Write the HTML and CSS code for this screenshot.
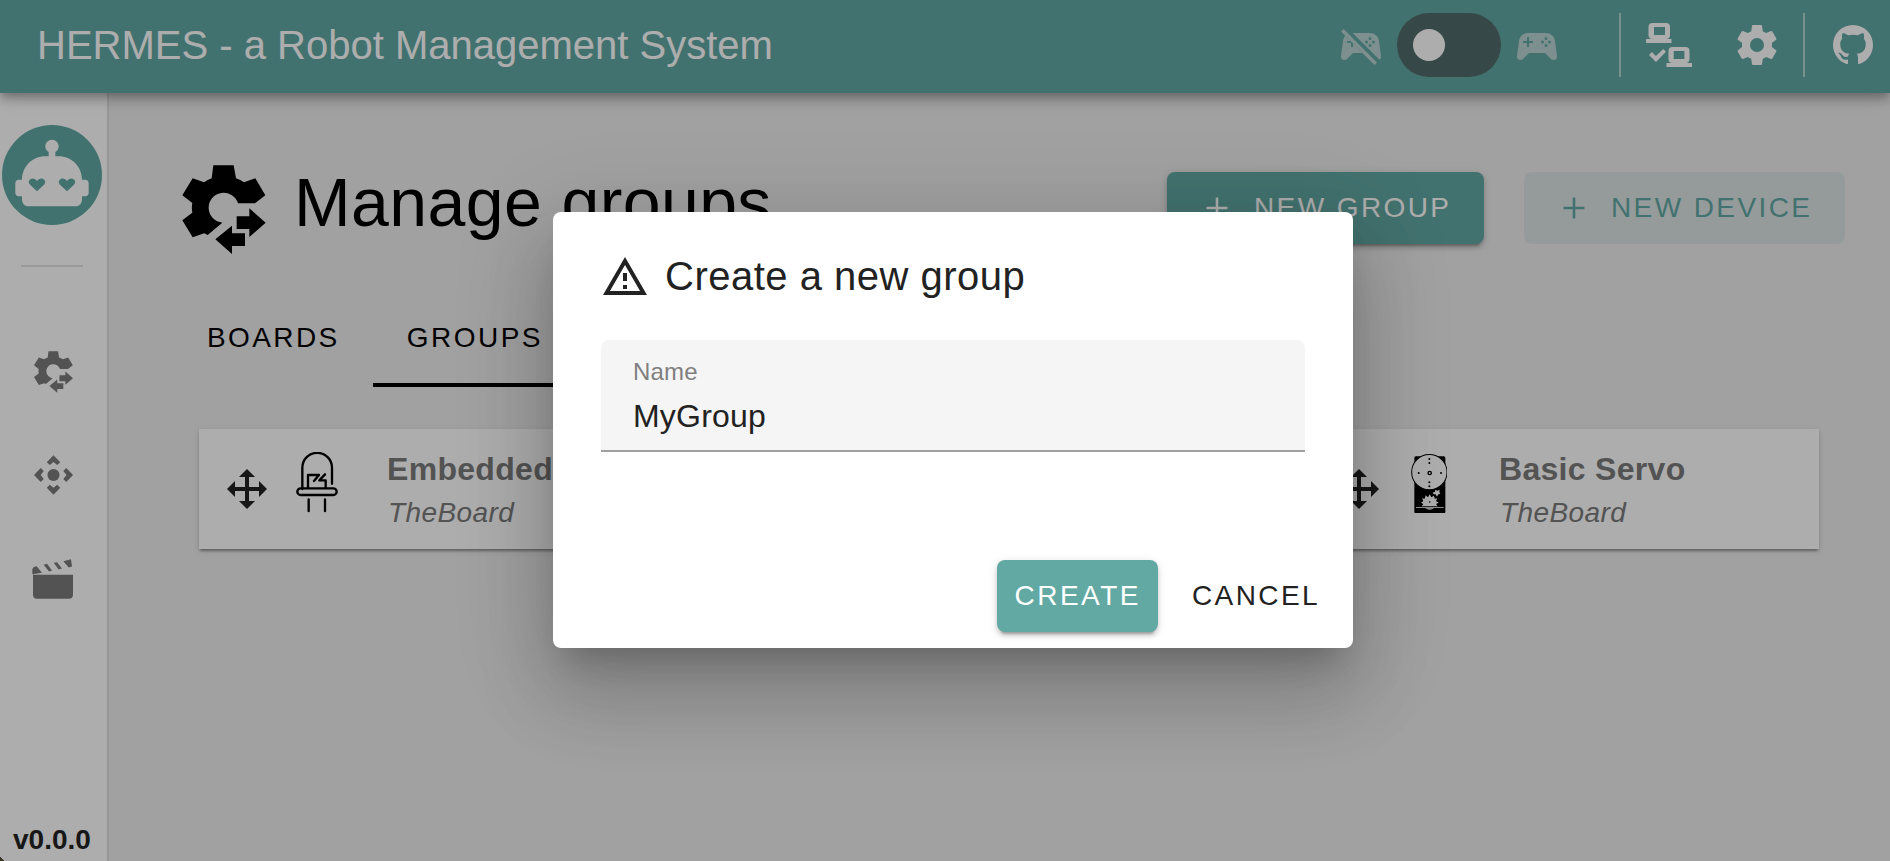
FILE: index.html
```html
<!DOCTYPE html>
<html lang="en">
<head>
<meta charset="utf-8">
<title>HERMES - a Robot Management System</title>
<link rel="stylesheet" href="styles.css">
</head>
<body>
<svg class="defs" width="0" height="0" aria-hidden="true">
  <symbol id="cog-transfer" viewBox="548 195 250 267">
    <path d="M641 196H702L709 235Q722 240 733 247L767 235L797 286L766 310H715A45 45 0 1 0 668 368L624 405L614 400L579 412L548 361L578 338Q575 323 578 309L548 286L579 235L613 247Q624 239 636 235Z"/>
    <path d="M711 349H749V325L798 368L749 411V387H711Z"/>
    <path d="M697 377V400H736V438H697V462L647 418Z"/>
  </symbol>
  <symbol id="move" viewBox="0 0 40 40">
    <path d="M20 0L28 8H22V18H32V12L40 20L32 28V22H22V32H28L20 40L12 32H18V22H8V28L0 20L8 12V18H18V8H12Z"/>
  </symbol>
  <symbol id="plus" viewBox="0 0 24 24"><path d="M19 12.850H12.850V19H11.150V12.850H5V11.150H11.150V5H12.850V11.150H19Z"/></symbol>
</svg>

<div class="app">
  <header class="bar">
    <h1 class="bar-title">HERMES - a Robot Management System</h1>
    <div class="bar-tools">
      <svg class="icon dim" viewBox="0 0 24 24">
        <clipPath id="upper"><path d="M1.85 0H24V22.15Z"/></clipPath>
        <clipPath id="lower"><path d="M0 3.2L20.8 24H0Z"/></clipPath>
        <g fill-rule="evenodd">
          <path clip-path="url(#upper)" d="M7.97,16L5,19C4.67,19.3 4.23,19.5 3.75,19.5A1.75,1.75 0 0,1 2,17.75V17.5L3,10.12C3.21,7.81 5.14,6 7.5,6H16.5C18.86,6 20.79,7.81 21,10.12L22,17.5V17.75A1.75,1.75 0 0,1 20.25,19.5C19.77,19.5 19.33,19.3 19,19L16.03,16H7.97M16.5,8A0.75,0.75 0 0,0 16.5,9.5A0.75,0.75 0 0,0 16.5,8M14.75,9.75A0.75,0.75 0 0,0 14.75,11.25A0.75,0.75 0 0,0 14.75,9.75M18.25,9.75A0.75,0.75 0 0,0 18.25,11.25A0.75,0.75 0 0,0 18.25,9.75M16.5,11.5A0.75,0.75 0 0,0 16.5,13A0.75,0.75 0 0,0 16.5,11.5Z"/>
          <path clip-path="url(#lower)" d="M7.97,16L5,19C4.67,19.3 4.23,19.5 3.75,19.5A1.75,1.75 0 0,1 2,17.75V17.5L3,10.12C3.21,7.81 5.14,6 7.5,6H16.5L16.03,16H7.97M7,8V10H5V11H7V13H8V11H10V10H8V8H7Z"/>
        </g>
        <path d="M2 5.27L3.28 4L20 20.72L18.73 22Z"/>
      </svg>
      <div class="switch"><span class="thumb"></span></div>
      <svg class="icon dim" viewBox="0 0 24 24"><path fill-rule="evenodd" d="M7.97,16L5,19C4.67,19.3 4.23,19.5 3.75,19.5A1.75,1.75 0 0,1 2,17.75V17.5L3,10.12C3.21,7.81 5.14,6 7.5,6H16.5C18.86,6 20.79,7.81 21,10.12L22,17.5V17.75A1.75,1.75 0 0,1 20.25,19.5C19.77,19.5 19.33,19.3 19,19L16.03,16H7.97M7,8V10H5V11H7V13H8V11H10V10H8V8H7M16.5,8A0.75,0.75 0 0,0 16.5,9.5A0.75,0.75 0 0,0 16.5,8M14.75,9.75A0.75,0.75 0 0,0 14.75,11.25A0.75,0.75 0 0,0 14.75,9.75M18.25,9.75A0.75,0.75 0 0,0 18.25,11.25A0.75,0.75 0 0,0 18.25,9.75M16.5,11.5A0.75,0.75 0 0,0 16.5,13A0.75,0.75 0 0,0 16.5,11.5Z"/></svg>
      <span class="rule rule-first"></span>
      <svg class="icon-lan" viewBox="0 0 46 44">
        <path fill-rule="evenodd" d="M6.5 0H20A4 4 0 0 1 24 4V12A4 4 0 0 1 20 16H25.5V20H0V16H6.5A4 4 0 0 1 2.5 12V4A4 4 0 0 1 6.5 0ZM8 4V12H19V4Z"/>
        <path fill-rule="evenodd" d="M26.5 24H39.5A4 4 0 0 1 43.5 28V36A4 4 0 0 1 39.5 40H46V44H20.5V40H26.5A4 4 0 0 1 22.5 36V28A4 4 0 0 1 26.5 24ZM27.7 28V36H38.4V28Z"/>
        <path d="M3 32L5.9 28.9L9.9 33L17.3 26L20 28.7L10 39Z"/>
      </svg>
      <svg class="icon icon-cog" viewBox="0 0 24 24"><path d="M12,15.5A3.5,3.5 0 0,1 8.5,12A3.5,3.5 0 0,1 12,8.5A3.5,3.5 0 0,1 15.5,12A3.5,3.5 0 0,1 12,15.5M19.43,12.97C19.47,12.65 19.5,12.33 19.5,12C19.5,11.67 19.47,11.34 19.43,11L21.54,9.37C21.73,9.22 21.78,8.95 21.66,8.73L19.66,5.27C19.54,5.05 19.27,4.96 19.05,5.05L16.56,6.05C16.04,5.66 15.5,5.32 14.87,5.07L14.5,2.42C14.46,2.18 14.25,2 14,2H10C9.75,2 9.54,2.18 9.5,2.42L9.13,5.07C8.5,5.32 7.96,5.66 7.44,6.05L4.95,5.05C4.73,4.96 4.46,5.05 4.34,5.27L2.34,8.73C2.21,8.95 2.27,9.22 2.46,9.37L4.57,11C4.53,11.34 4.5,11.67 4.5,12C4.5,12.33 4.53,12.65 4.57,12.97L2.46,14.63C2.27,14.78 2.21,15.05 2.34,15.27L4.34,18.73C4.46,18.95 4.73,19.03 4.95,18.95L7.44,17.94C7.96,18.34 8.5,18.68 9.13,18.93L9.5,21.58C9.54,21.82 9.75,22 10,22H14C14.25,22 14.46,21.82 14.5,21.58L14.87,18.93C15.5,18.67 16.04,18.34 16.56,17.94L19.05,18.95C19.27,19.03 19.54,18.95 19.66,18.73L21.66,15.27C21.78,15.05 21.73,14.78 21.54,14.63L19.43,12.97Z"/></svg>
      <span class="rule rule-second"></span>
      <svg class="icon icon-github" viewBox="0 0 24 24"><path d="M12,2A10,10 0 0,0 2,12C2,16.42 4.87,20.17 8.84,21.5C9.34,21.58 9.5,21.27 9.5,21C9.5,20.77 9.5,20.14 9.5,19.31C6.73,19.91 6.14,17.97 6.14,17.97C5.68,16.81 5.03,16.5 5.03,16.5C4.12,15.88 5.1,15.9 5.1,15.9C6.1,15.97 6.63,16.93 6.63,16.93C7.5,18.45 8.97,18 9.54,17.76C9.63,17.11 9.89,16.67 10.17,16.42C7.95,16.17 5.62,15.31 5.62,11.5C5.62,10.39 6,9.5 6.65,8.79C6.55,8.54 6.2,7.5 6.75,6.15C6.75,6.15 7.59,5.88 9.5,7.17C10.29,6.95 11.15,6.84 12,6.84C12.85,6.84 13.71,6.95 14.5,7.17C16.41,5.88 17.25,6.15 17.25,6.15C17.8,7.5 17.45,8.54 17.35,8.79C18,9.5 18.38,10.39 18.38,11.5C18.38,15.32 16.04,16.16 13.81,16.41C14.17,16.72 14.5,17.33 14.5,18.26C14.5,19.6 14.5,20.68 14.5,21C14.5,21.27 14.66,21.59 15.17,21.5C19.14,20.16 22,16.42 22,12A10,10 0 0,0 12,2Z"/></svg>
    </div>
  </header>

  <div class="body">
    <nav class="side">
      <div class="avatar">
        <svg class="robot" viewBox="0 0 24 24"><path fill-rule="evenodd" d="M22 14H21C21 10.13 17.87 7 14 7H13V5.73C13.6 5.39 14 4.74 14 4C14 2.9 13.11 2 12 2S10 2.9 10 4C10 4.74 10.4 5.39 11 5.73V7H10C6.13 7 3 10.13 3 14H2C1.45 14 1 14.45 1 15V18C1 18.55 1.45 19 2 19H3V20C3 21.11 3.9 22 5 22H19C20.11 22 21 21.11 21 20V19H22C22.55 19 23 18.55 23 18V15C23 14.45 22.55 14 22 14ZM7.5 17.5L5.4 15.5C4.9 15 4.9 14.4 5.4 13.95C6.1 13.4 7 13.6 7.5 14.4C8 13.6 8.9 13.4 9.6 13.95C10.1 14.4 10.1 15 9.6 15.5ZM16.5 17.5L14.4 15.5C13.9 15 13.9 14.4 14.4 13.95C15.1 13.4 16 13.6 16.5 14.4C17 13.6 17.9 13.4 18.6 13.95C19.1 14.4 19.1 15 18.6 15.5Z"/></svg>
      </div>
      <hr class="side-rule">
      <svg class="nav-cog"><use href="#cog-transfer"/></svg>
      <svg class="nav-pad" viewBox="101 406 116 118">
        <circle cx="159" cy="465" r="18"/>
        <path d="M139 427L159 406L179 427L170 435L159 426L148 435ZM139 503L159 524L179 503L170 494L159 503L148 494ZM121 444L101 465L121 486L130 477L121 465L130 453ZM197 444L217 465L197 486L188 477L198 465L188 453Z"/>
      </svg>
      <svg class="nav-movie" viewBox="96 718 123 119">
        <path d="M99 765H219V825Q219 837 207 837H111Q99 837 99 825ZM97 763V748Q98 742 106 740L110 739L126 759ZM131 735L141 732L156 752L147 755ZM161 729L171 727L186 746L176 749ZM190 724L213 718L216 740L206 743Z"/>
      </svg>
      <span class="version">v0.0.0</span>
    </nav>

    <main class="main">
      <div class="head">
        <svg class="head-icon"><use href="#cog-transfer"/></svg>
        <h2 class="head-title">Manage groups</h2>
        <button class="btn btn-solid"><svg class="plus"><use href="#plus"/></svg>NEW GROUP</button>
        <button class="btn btn-tonal"><svg class="plus"><use href="#plus"/></svg>NEW DEVICE</button>
      </div>
      <div class="tabs">
        <div class="tab">BOARDS</div>
        <div class="tab tab-active">GROUPS</div>
      </div>
      <div class="cards">
        <article class="card">
          <svg class="handle"><use href="#move"/></svg>
          <div class="pic">
            <svg class="led" viewBox="348 126 126 182"><path d="M367 237V173A44.5 44.5 0 0 1 456 173V221M362 235H460A10 10 0 0 1 460 255H362A10 10 0 0 1 362 235ZM384 235V195H417L402 213M435 193L418 211H437V235M386 268V303M435 268V303"/></svg>
          </div>
          <div class="info"><div class="name">Embedded LED</div><div class="board">TheBoard</div></div>
        </article>
        <article class="card"></article>
        <article class="card">
          <svg class="handle"><use href="#move"/></svg>
          <div class="pic">
            <svg class="servo" viewBox="242 131 110 179">
              <rect x="252" y="138" width="93" height="171" rx="5"/>
              <circle cx="297" cy="185.500" r="53" fill="#fff" stroke="#000" stroke-width="3"/>
              <circle cx="298" cy="188" r="5" fill="none" stroke="#000" stroke-width="4"/>
              <g><circle cx="297" cy="146" r="3"/><circle cx="297" cy="158" r="3"/><circle cx="265" cy="188" r="3"/><circle cx="332" cy="188" r="3"/><circle cx="297" cy="216" r="3"/><circle cx="297" cy="228" r="3"/></g>
              <path fill="#fff" d="M274 288L279 281L272 277L279 272L275 264L283 265L286 255L293 261L298 252L303 261L311 256L313 265L321 264L317 272L325 277L317 281L322 288ZM307 247L314 244L315 238L321 241L328 238L327 245L330 251L324 252L320 259L316 252L310 252ZM284 294H312Q298 302 284 294Z"/>
              <path d="M257 291.500H340" stroke="#fff" stroke-width="2.500"/>
              <circle cx="298" cy="275" r="2.500"/>
            </svg>
          </div>
          <div class="info"><div class="name">Basic Servo</div><div class="board">TheBoard</div></div>
        </article>
      </div>
    </main>
  </div>
</div>

<div class="scrim">
  <section class="dialog">
    <div class="dialog-head">
      <svg class="icon" viewBox="0 0 24 24"><path d="M12,2L1,21H23M12,6L19.53,19H4.47M11,10V14H13V10M11,16V18H13V16"/></svg>
      <h3 class="dialog-title">Create a new group</h3>
    </div>
    <div class="field">
      <div class="field-label">Name</div>
      <div class="field-value">MyGroup</div>
    </div>
    <div class="actions">
      <button class="btn btn-create">CREATE</button>
      <button class="btn btn-cancel">CANCEL</button>
    </div>
  </section>
  <span class="corner"></span>
</div>
</body>
</html>
```
FILE: styles.css
```css
* { box-sizing: border-box; }
body {
  margin: 0;
  font-family: "Liberation Sans", Arial, sans-serif;
  color: #222;
  overflow: hidden;
}
svg { display: block; flex: none; fill: currentColor; }
h1, h2, h3 { margin: 0; font-weight: 400; white-space: nowrap; }
.defs { position: absolute; }
.app { display: flex; flex-direction: column; height: 861px; background: #ededed; }

/* App bar */
.bar {
  flex: none;
  height: 93px;
  padding: 0 13px 3px 37px;
  display: flex;
  align-items: center;
  justify-content: space-between;
  background: #62a9a4;
  color: #fff;
  z-index: 1;
  box-shadow: 0 4px 8px -2px rgba(0,0,0,.2), 0 8px 10px rgba(0,0,0,.14), 0 2px 20px rgba(0,0,0,.12);
}
.bar-title { font-size: 40px; line-height: 90px; }
.bar-tools { display: flex; align-items: center; }
.icon { width: 48px; height: 48px; }
.dim { opacity: .6; fill: #f4eff0; }
.switch { width: 104px; height: 64px; margin: 0 12px; padding: 16px; border-radius: 32px; background: #506b69; }
.thumb { display: block; width: 32px; height: 32px; border-radius: 50%; background: #fff; }
.rule { width: 2px; height: 64px; background: rgba(255,255,255,.5); }
.rule-first { margin: 0 25px 0 58px; }
.rule-second { margin: 0 24px 0 22px; }
.icon-lan { width: 46px; height: 44px; margin-right: 41px; }

/* Side navigation */
.body { flex: 1; display: flex; min-height: 0; }
.side {
  width: 109px;
  padding: 32px 0 0;
  display: flex;
  flex-direction: column;
  background: #fff;
  border-right: 2px solid #dedede;
  color: #7b7b7b;
}
.avatar {
  width: 100px;
  height: 100px;
  margin-left: 2px;
  padding: 8px 0 0 10px;
  border-radius: 50%;
  background: #62a9a4;
  color: #fff;
}
.robot { width: 80px; height: 80px; }
.side-rule { width: 62px; height: 2px; margin: 40px 0 0 21px; border: 0; background: #e2e2e2; }
.nav-cog { width: 39px; height: 42px; margin: 84px 0 0 33.500px; }
.nav-pad { width: 39px; height: 40px; margin: 62px 0 0 33.500px; }
.nav-movie { width: 41px; height: 40px; margin: 64px 0 0 32px; }
.version { margin: auto 0 5px 13px; font-size: 28px; line-height: 32px; font-weight: 700; color: #222; }

/* Page */
.main { flex: 1; padding: 72px 45px 0 73px; color: #000; }
.head { display: flex; align-items: flex-start; }
.head-icon { width: 84px; height: 89px; }
.head-title { margin: -1px auto 0 28px; font-size: 68px; line-height: 76px; letter-spacing: .4px; }
.btn {
  display: flex;
  align-items: center;
  height: 72px;
  border: 0;
  border-radius: 8px;
  font: 28px "Liberation Sans", Arial, sans-serif;
  letter-spacing: 2.5px;
  white-space: nowrap;
}
.head .btn { margin-top: 7px; padding: 0 0 1px 32px; letter-spacing: 2.4px; }
.plus { width: 36px; height: 36px; margin-right: 19px; }
.btn-solid, .btn-create {
  background: #62a9a4;
  color: #fff;
  box-shadow: 0 6px 2px -4px rgba(0,0,0,.2), 0 4px 4px rgba(0,0,0,.14), 0 2px 10px rgba(0,0,0,.12);
}
.btn-solid { width: 317px; }
.btn-tonal { width: 321px; margin-left: 40px; background: rgba(98,169,164,.12); color: #62a9a4; }
.tabs { display: flex; height: 96px; margin: 37px 0 0 -7px; }
.tab { height: 96px; padding: 0 33px 0 32px; font-size: 28px; line-height: 94px; letter-spacing: 2.4px; }
.tab-active { padding: 0 33px 0 34px; border-bottom: 4px solid #000; letter-spacing: 2.5px; }
.cards { display: grid; grid-template-columns: repeat(3, 508px); gap: 48px; margin: 42px 0 0 17px; }
.card {
  display: flex;
  height: 120px;
  padding-left: 28px;
  background: #fff;
  box-shadow: 0 4px 2px -2px rgba(0,0,0,.2), 0 2px 2px rgba(0,0,0,.14), 0 2px 6px rgba(0,0,0,.12);
}
.handle { width: 40px; height: 40px; margin-top: 40px; color: #222; }
.pic { width: 60px; margin: 23px 40px 0 20px; display: flex; justify-content: center; align-items: flex-start; }
.led { width: 42px; height: 60.700px; fill: none; stroke: #000; stroke-width: 7; stroke-linecap: round; stroke-linejoin: round; }
.servo { width: 36.700px; height: 59.700px; margin-top: 1.500px; }
.info { padding-top: 20px; color: #7b7b7b; white-space: nowrap; }
.name { font-size: 32px; line-height: 40px; font-weight: 700; letter-spacing: .3px; }
.board { margin-top: 4px; padding-left: 1px; font-size: 28px; line-height: 40px; font-style: italic; letter-spacing: .4px; }

/* Modal */
.scrim {
  position: absolute;
  inset: 0;
  z-index: 2;
  padding: 212px 537px 0 553px;
  background: rgba(0,0,0,.32);
}
.dialog {
  height: 436px;
  padding: 40px 48px 0;
  border-radius: 8px;
  background: #fff;
  box-shadow: 0 22px 30px -14px rgba(0,0,0,.2), 0 48px 76px 6px rgba(0,0,0,.14), 0 18px 92px 16px rgba(0,0,0,.12);
}
.dialog-head { display: flex; align-items: center; gap: 16px; height: 50px; }
.dialog-title { padding-bottom: 2px; font-size: 40px; line-height: 50px; letter-spacing: .5px; }
.field {
  height: 112px;
  margin: 38px 0 0;
  padding: 17px 32px 0;
  border-radius: 8px 8px 0 0;
  border-bottom: 2px solid #a0a0a0;
  background: #f5f5f5;
}
.field-label { font-size: 24px; line-height: 30px; letter-spacing: .2px; color: #7f7f7f; }
.field-value { margin-top: 9px; font-size: 32px; line-height: 40px; letter-spacing: .2px; }
.actions { display: flex; justify-content: flex-end; gap: 18px; margin: 108px -32px 0 0; }
.btn-create, .btn-cancel { width: 161px; padding: 0 0 1px 17.500px; }
.btn-cancel { padding-left: 16px; background: none; color: #222; letter-spacing: 2.4px; }

/* Rounded window corner */
.corner {
  position: absolute;
  left: 0;
  bottom: 0;
  width: 5px;
  height: 4px;
  background: linear-gradient(45deg, #3b3326 50%, transparent 52%);
}
```
